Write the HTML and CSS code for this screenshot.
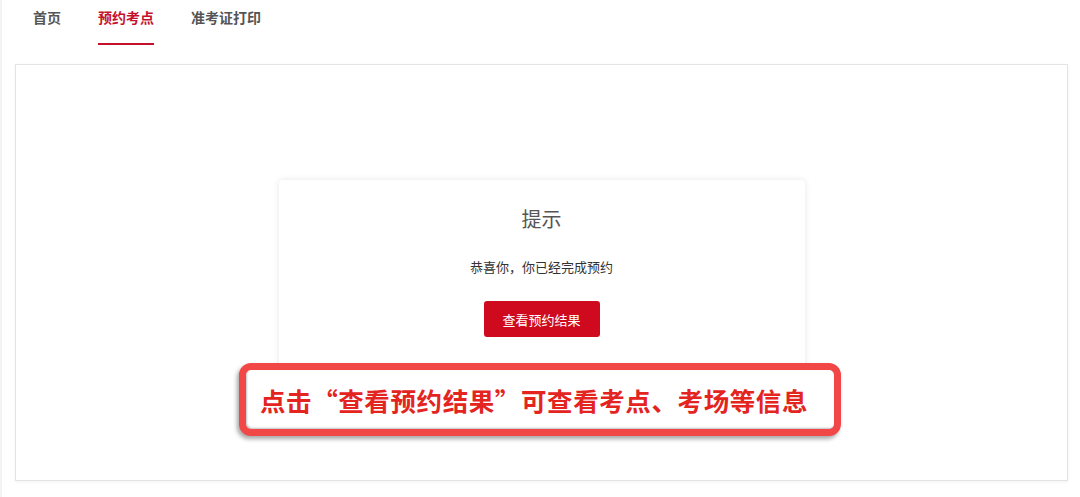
FILE: index.html
```html
<!DOCTYPE html>
<html lang="zh">
<head>
<meta charset="utf-8">
<title>预约考点</title>
<link rel="stylesheet" href="styles.css">
</head>
<body>
<nav class="tabs">
  <a class="tab">首页</a>
  <a class="tab active">预约考点</a>
  <a class="tab">准考证打印</a>
</nav>
<main class="panel">
  <section class="card">
    <h2 class="card-title">提示</h2>
    <p class="card-text">恭喜你，你已经完成预约</p>
    <button class="btn">查看预约结果</button>
  </section>
  <div class="callout">点击“查看预约结果”可查看考点、考场等信息</div>
</main>
</body>
</html>
```

FILE: styles.css
```css
* { box-sizing: border-box; }
html, body { margin: 0; padding: 0; }
body {
  width: 1080px;
  height: 497px;
  background: #fff;
  font-family: "Noto Sans CJK SC", "Microsoft YaHei", sans-serif;
  color: #333;
  overflow: hidden;
  border-left: 2px solid #f3f3f3;
}
.tabs {
  display: flex;
  gap: 37px;
  padding-left: 31px;
  height: 45px;
}
.tab {
  font-size: 14px;
  font-weight: 700;
  line-height: 20px;
  padding-top: 7px;
  height: 45px;
  color: #555;
  border-bottom: 2px solid transparent;
}
.tab.active {
  color: #c5102c;
  border-bottom-color: #c5102c;
}
.panel {
  position: relative;
  margin: 19px 12px 0 13px;
  height: 417px;
  border: 1px solid #e4e4e4;
  box-shadow: 0 1px 3px rgba(0,0,0,0.06);
  background: #fff;
  padding-top: 115px;
  display: flex;
  flex-direction: column;
  align-items: center;
}
.card {
  width: 526px;
  background: #fff;
  border-radius: 4px;
  box-shadow: 0 0 6px rgba(0,0,0,0.10);
  padding: 27px 0 34px;
  display: flex;
  flex-direction: column;
  align-items: center;
}
.card-title {
  margin: 0;
  font-size: 20px;
  font-weight: 400;
  line-height: 24px;
  color: #555;
}
.card-text {
  margin: 26px 0 0;
  font-size: 13px;
  line-height: 20px;
  color: #333;
}
.btn {
  margin-top: 24px;
  width: 116px;
  height: 36px;
  border: none;
  border-radius: 3px;
  background: #cf0a1f;
  color: #fff;
  font-family: inherit;
  font-size: 13px;
}
.callout {
  position: absolute;
  left: 223px;
  top: 298px;
  width: 602px;
  height: 73px;
  border: 7px solid #f24747;
  border-radius: 12px;
  background: #fff;
  box-shadow: -2px 3px 4px rgba(0,0,0,0.35), inset 1px -1px 2px rgba(0,0,0,0.25);
  display: flex;
  align-items: center;
  justify-content: center;
  font-size: 25.5px;
  font-weight: 700;
  color: #e3241f;
  letter-spacing: 0.6px;
  padding-right: 12px;
}
```
